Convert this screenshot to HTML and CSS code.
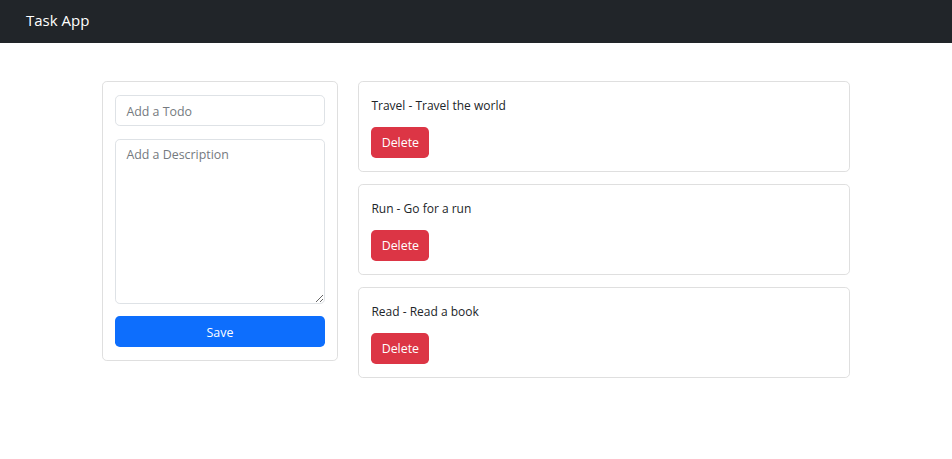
FILE: index.html
```html
<!DOCTYPE html>
<html lang="en">
<head>
<meta charset="utf-8">
<title>Task App</title>
<link rel="stylesheet" href="styles.css">
</head>
<body>
<nav class="navbar"><span class="brand">Task App</span></nav>
<main class="container">
  <div class="row">
    <section class="col-left">
      <div class="card form-card">
        <input class="field" type="text" placeholder="Add a Todo">
        <textarea class="field area" placeholder="Add a Description"></textarea>
        <button class="btn btn-primary">Save</button>
      </div>
    </section>
    <section class="col-right">
      <div class="card todo">
        <p class="todo-text">Travel - Travel the world</p>
        <button class="btn btn-danger">Delete</button>
      </div>
      <div class="card todo">
        <p class="todo-text">Run - Go for a run</p>
        <button class="btn btn-danger">Delete</button>
      </div>
      <div class="card todo">
        <p class="todo-text">Read - Read a book</p>
        <button class="btn btn-danger">Delete</button>
      </div>
    </section>
  </div>
</main>
</body>
</html>
```

FILE: styles.css
```css
* { box-sizing: border-box; }
html, body { margin: 0; padding: 0; }
body {
  font-family: "Open Sans", "Noto Sans", sans-serif;
  font-size: 12px;
  line-height: 1.5;
  color: #212529;
  background: #fff;
}
.navbar {
  height: 43px;
  background: #212529;
  display: flex;
  align-items: center;
  padding-left: 26px;
}
.brand {
  color: #fff;
  font-size: 15px;
  line-height: 1;
  padding-bottom: 2px;
}
.container {
  width: 768px;
  margin: 38px auto 0;
  padding: 0 9.6px;
}
.row {
  display: flex;
  gap: 19.2px;
  align-items: flex-start;
}
.col-left { width: 236.8px; flex: none; }
.col-right { flex: 1; display: flex; flex-direction: column; gap: 12px; }
.card {
  border: 1px solid #dfdfdf;
  border-radius: 4.8px;
  padding: 12.8px;
  background: #fff;
}
.form-card { display: flex; flex-direction: column; gap: 12.8px; }
.field {
  display: block;
  width: 100%;
  height: 31px;
  font: inherit;
  font-size: 12.4px;
  color: #212529;
  padding: 6px 10px 4px;
  border: 1px solid #dee2e6;
  border-radius: 4.8px;
  outline: none;
}
.field::placeholder { color: #757a80; }
.area { height: 165px; resize: vertical; padding-top: 6.5px; }
.btn {
  font: inherit;
  font-size: 12.4px;
  color: #fff;
  border: 1px solid transparent;
  border-radius: 4.8px;
  padding: 5px 9.6px 3px;
  height: 31px;
  cursor: pointer;
}
.btn-primary { background: #0d6efd; width: 100%; }
.btn-danger { background: #dc3545; width: 58px; padding: 5px 0 3px; }
.todo-text { margin: 0 0 12.8px; line-height: 19.6px; padding-top: 1px; height: 19.6px; }
.todo .btn { display: block; }
```
